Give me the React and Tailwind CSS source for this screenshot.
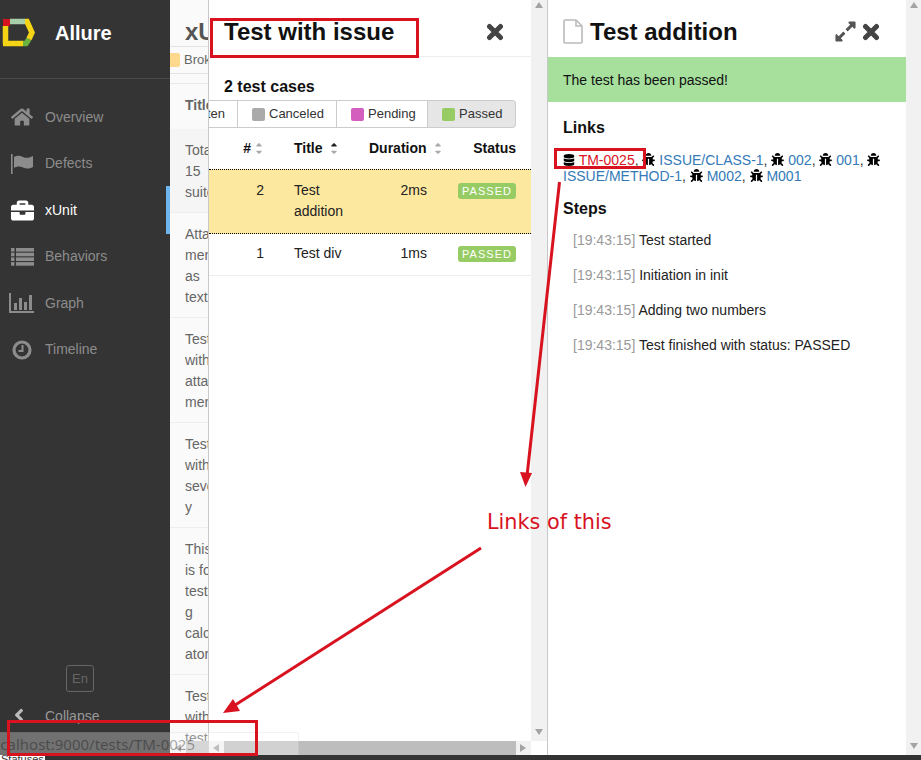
import React from "react";
import { FaExpandAlt, FaBug, FaDatabase, FaHome, FaBriefcase, FaAngleLeft, FaSortUp, FaSortDown } from "react-icons/fa";

const Logo = () => (
  <svg width="34" height="30" viewBox="0 0 34 30" className="shrink-0">
    <g fill="none" strokeWidth="5.5">
      <path d="M4.5 8V26" stroke="#f5d416" />
      <path d="M2 25.5H22" stroke="#f5d416" />
      <path d="M22 25.5H25L28 21" stroke="#6cb23e" />
      <path d="M28 21L31 14.5L26 3.5H24" stroke="#f5d416" />
      <path d="M9 3.5H24" stroke="#a9ceaa" />
    </g>
    <rect x="2" y="1" width="7" height="7" fill="#d5141f" />
  </svg>
);

const GraphIcon = () => (
  <svg width="26" height="20" viewBox="0 0 26 20" fill="#8c8c8c">
    <rect x="0" y="0" width="2" height="19" />
    <rect x="0" y="18" width="25" height="2" />
    <rect x="5" y="10" width="3" height="7" />
    <rect x="10" y="5" width="3" height="12" />
    <rect x="15" y="9" width="3" height="8" />
    <rect x="20" y="2" width="3" height="15" />
  </svg>
);

const FlagIcon = () => (
  <svg width="24" height="20" viewBox="0 0 24 20" fill="#8c8c8c">
    <rect x="1" y="0" width="1.6" height="20" />
    <path d="M4 3C7 1 10 1.5 13 3C16 4.5 19 4 23 2V13C19 15 16 15 13 13.5C10 12 7 12 4 14Z" />
  </svg>
);

const ListIcon = () => (
  <svg width="23" height="18" viewBox="0 0 23 18" fill="#8c8c8c">
    {[0, 4.7, 9.4, 14.1].map((y) => (
      <g key={y}>
        <rect x="0" y={y} width="3.5" height="3.6" />
        <rect x="5" y={y} width="18" height="3.6" />
      </g>
    ))}
  </svg>
);

const ClockIcon = () => (
  <svg width="20" height="20" viewBox="0 0 20 20" fill="none" stroke="#8c8c8c">
    <circle cx="10" cy="10" r="8" strokeWidth="3.2" />
    <path d="M10.5 5V11H6.5" strokeWidth="2" />
  </svg>
);

const CloseIcon = () => (
  <svg width="18" height="18" viewBox="0 0 18 18" fill="none" stroke="#444" strokeWidth="5" strokeLinecap="round" className="shrink-0">
    <path d="M3.5 3.5L14.5 14.5M14.5 3.5L3.5 14.5" />
  </svg>
);

const FileIcon = () => (
  <svg width="20" height="25" viewBox="0 0 20 25" fill="none" stroke="#bbbbbb" strokeWidth="1.6" className="shrink-0">
    <path d="M1 2C1 1.4 1.4 1 2 1H13L19 7V23C19 23.6 18.6 24 18 24H2C1.4 24 1 23.6 1 23Z" />
    <path d="M13 1V7H19" />
  </svg>
);

const navItems = [
  { label: "Overview", icon: <FaHome size={22} /> },
  { label: "Defects", icon: <FlagIcon /> },
  { label: "xUnit", icon: <FaBriefcase size={23} />, active: true },
  { label: "Behaviors", icon: <ListIcon /> },
  { label: "Graph", icon: <GraphIcon /> },
  { label: "Timeline", icon: <ClockIcon /> },
];

const Sidebar = () => (
  <aside className="w-[170px] shrink-0 h-full bg-[#343434] flex flex-col">
    <div className="h-[79px] shrink-0 border-b border-[#4a4a4a] flex items-center pl-[1px] pb-[13px]">
      <Logo />
      <span className="ml-[20px] text-[20px] font-bold text-white">Allure</span>
    </div>
    <nav className="pt-[15px] flex flex-col">
      {navItems.map((item) => (
        <div
          key={item.label}
          className={`relative h-[46.5px] flex items-center pl-[9px] text-[14px] ${item.active ? "text-white" : "text-[#8c8c8c]"}`}
        >
          <span className="w-[26px] flex justify-center">{item.icon}</span>
          <span className="ml-[10px]">{item.label}</span>
          {item.active && <span className="absolute right-0 top-[-1px] bottom-0 w-[4px] bg-[#6eb5ee]" />}
        </div>
      ))}
    </nav>
    <div className="mt-auto flex flex-col">
      <div className="ml-[66px] w-[28px] h-[27px] border border-[#666] rounded-[3px] text-[#666] text-[13px] flex items-center justify-center">
        En
      </div>
      <div className="h-[63px] pt-[14px] flex items-start pl-[9px] text-[14px] text-[#999]">
        <FaAngleLeft size={20} className="text-[#bbb] mt-[-1px]" />
        <span className="ml-[16px]">Collapse</span>
      </div>
    </div>
  </aside>
);

const listRows = [
  { lines: ["Total", "15", "suites"], bg: "bg-[#f5f5f5]", h: "h-[84px]" },
  { lines: ["Attach", "ments", "as", "text"], h: "h-[105px]" },
  { lines: ["Tests", "with", "attach", "ments"], h: "h-[105px]" },
  { lines: ["Tests", "with", "severit", "y"], h: "h-[105px]" },
  { lines: ["This", "is for", "testin", "g", "calcul", "ator"], h: "h-[147px]" },
  { lines: ["Tests", "with", "tests"], h: "h-[70px]" },
];

const Triangle = ({ dir, className = "" }) => {
  const pts = { up: "5,1 9,7 1,7", down: "1,1 9,1 5,7", left: "7,1 7,9 1,5", right: "1,1 1,9 7,5" }[dir];
  return (
    <svg width="10" height="10" viewBox="0 0 10 10" className={className}>
      <polygon points={pts} fill="#a3a3a3" />
    </svg>
  );
};

const XunitPanel = () => (
  <section className="w-[38px] shrink-0 h-full bg-[#fafafa] overflow-hidden flex flex-col whitespace-nowrap">
    <div className="flex-1 min-h-0 overflow-hidden">
      <div className="h-[47px] border-b border-[#e4e4e4] pl-[15px] pt-[17px] text-[24px] leading-[30px] font-bold text-[#555]">xUnit</div>
      <div className="h-[27px] border-b border-[#e4e4e4] flex items-center text-[13px] text-[#666]">
        <span className="shrink-0 w-[10px] h-[14px] bg-[#fcd98c] rounded-r-[2px]" />
        <span className="ml-[4px]">Broken</span>
      </div>
      <div className="h-[10px] border-b border-[#e9e9e9]" />
      <div className="h-[45px] pl-[15px] pb-[2px] flex items-center text-[14px] font-bold text-[#666]">Title</div>
      {listRows.map((row, i) => (
        <div
          key={i}
          className={`${row.h} ${row.bg || ""} border-b border-[#eeeeee] pl-[15px] pt-[11px] text-[14px] leading-[21px] text-[#666]`}
        >
          {row.lines.map((l) => (
            <div key={l}>{l}</div>
          ))}
        </div>
      ))}
    </div>
    <div className="h-[14px] shrink-0 bg-[#f1f1f1] flex items-center pl-[1px]">
      <Triangle dir="left" className="ml-[3px]" />
      <div className="ml-[2px] flex-1 h-full bg-[#c4c4c4]" />
    </div>
  </section>
);

const statusButtons = [
  { label: "Canceled", color: "bg-[#aaaaaa]", w: "w-[99px]" },
  { label: "Pending", color: "bg-[#d35ebe]", w: "w-[91px]" },
  { label: "Passed", color: "bg-[#97cc64]", w: "w-[88px]", active: true },
];

const Badge = () => (
  <span className="inline-flex items-center justify-center w-[58px] h-[16px] rounded-[3px] bg-[#97cc64] text-white text-[11px] tracking-[1px]">
    PASSED
  </span>
);

const GRID = "grid grid-cols-[55px_105px_58px_89px]";

const SortIcon = ({ active }) => (
  <span className="relative inline-block w-[9px] h-[13px]">
    <FaSortUp size={10} className={`absolute left-0 top-0 ${active ? "text-[#222]" : "text-[#aaa]"}`} />
    <FaSortDown size={10} className="absolute left-0 top-[3px] text-[#aaa]" />
  </span>
);

const MiddlePanel = () => (
  <section className="w-[339px] shrink-0 h-full bg-white border-l border-[#c8c8c8] flex">
    <div className="w-[322px] h-full flex flex-col overflow-hidden">
      <div className="flex-1 min-h-0">
        <header className="h-[57px] border-b border-[#eeeeee] pl-[15px] pr-[27px] flex items-start justify-between">
          <h2 className="text-[24px] leading-[30px] pt-[17px] font-bold text-[#111]">Test with issue</h2>
          <span className="mt-[23px]"><CloseIcon /></span>
        </header>
        <div className="pl-[15px] pt-[21px] text-[16px] leading-[18px] font-bold text-[#111]">2 test cases</div>
        <div className="mt-[4px] flex h-[28px] text-[13px] text-[#333]">
          <div className="w-[29px] h-full border-y border-r border-[#cccccc] flex justify-end items-center overflow-hidden pr-[12px]">
            Written
          </div>
          {statusButtons.map((b) => (
            <div
              key={b.label}
              className={`${b.w} h-full border-y border-r border-[#cccccc] flex items-center pl-[14px] ${b.active ? "bg-[#e6e6e6] rounded-r-[4px]" : ""}`}
            >
              <span className={`shrink-0 w-[13px] h-[13px] rounded-[2px] ${b.color}`} />
              <span className="ml-[4px]">{b.label}</span>
            </div>
          ))}
        </div>
        <div className={`${GRID} h-[41px] items-center text-[14px] font-bold text-[#111]`}>
          <div className="flex justify-end items-center gap-[3px] pr-[1px]">
            <span>#</span>
            <SortIcon />
          </div>
          <div className="pl-[30px] flex items-center gap-[6px]">
            <span>Title</span>
            <SortIcon active />
          </div>
          <div className="flex items-center gap-[6px] whitespace-nowrap">
            <span>Duration</span>
            <SortIcon />
          </div>
          <div className="text-right">Status</div>
        </div>
        <div className={`${GRID} bg-[#fde8a0] border-y border-dotted border-black pt-[10px] pb-[11px] text-[14px] leading-[21px] text-[#222]`}>
          <div className="text-right">2</div>
          <div className="pl-[30px]">Test addition</div>
          <div className="text-right">2ms</div>
          <div className="flex justify-end pt-[3px]"><Badge /></div>
        </div>
        <div className={`${GRID} border-b border-[#eeeeee] pt-[9px] pb-[11px] text-[14px] leading-[21px] text-[#222]`}>
          <div className="text-right">1</div>
          <div className="pl-[30px]">Test div</div>
          <div className="text-right">1ms</div>
          <div className="flex justify-end pt-[3px]"><Badge /></div>
        </div>
      </div>
      <div className="h-[14px] shrink-0 bg-[#f1f1f1] flex items-center">
        <Triangle dir="left" className="ml-[3px]" />
        <div className="ml-[2px] w-[292px] h-full bg-[#bdbdbd]" />
        <Triangle dir="right" className="ml-[3px]" />
      </div>
    </div>
    <div className="flex-1 h-full flex flex-col">
      <div className="h-[741px] bg-[#f1f1f1] flex flex-col items-center justify-between pt-[1px] pb-[3px]">
        <Triangle dir="up" />
        <Triangle dir="down" />
      </div>
    </div>
  </section>
);

const links = [
  ["ISSUE/CLASS-1", ", "],
  ["002", ", "],
  ["001", ", "],
  ["ISSUE/METHOD-1", ", "],
  ["M002", ", "],
  ["M001", ""],
];

const steps = ["Test started", "Initiation in init", "Adding two numbers", "Test finished with status: PASSED"];

const RightPanel = () => (
  <section className="flex-1 min-w-0 h-full bg-white border-l border-[#c8c8c8] flex">
    <div className="flex-1 min-w-0">
      <header className="h-[57px] pl-[15px] pr-[26px] flex items-start">
        <span className="mt-[19px]"><FileIcon /></span>
        <h2 className="ml-[7px] text-[24px] leading-[30px] pt-[17px] font-bold text-[#111]">Test addition</h2>
        <FaExpandAlt size={23} className="ml-auto text-[#555] mt-[20px]" />
        <span className="ml-[5px] mt-[23px]"><CloseIcon /></span>
      </header>
      <div className="h-[45px] bg-[#a6e09c] pl-[15px] pt-[1px] flex items-center text-[14px] text-[#111]">The test has been passed!</div>
      <div className="pl-[15px] pr-[20px]">
        <h3 className="pt-[17px] text-[16px] leading-[18px] font-bold text-[#111]">Links</h3>
        <p className="mt-[15px] text-[14px] leading-[16px] text-[#333]">
          <FaDatabase size={12} className="inline align-[-1px] text-black" />{" "}
          <a className="text-[#d8121f]">TM-0025</a>,{" "}
          {links.map(([label, sep]) => (
            <React.Fragment key={label}>
              <FaBug size={13} className="inline align-[-1px] text-black" />{" "}
              <a className="text-[#337ab7]">{label}</a>
              {sep}
            </React.Fragment>
          ))}
        </p>
        <h3 className="mt-[16px] text-[16px] leading-[18px] font-bold text-[#111]">Steps</h3>
        <div className="mt-[14px] pl-[10px] flex flex-col gap-[19px] text-[14px] leading-[16px] text-[#222]">
          {steps.map((s) => (
            <div key={s}>
              <span className="text-[#999]">[19:43:15]</span> {s}
            </div>
          ))}
        </div>
      </div>
    </div>
    <div className="w-[15px] shrink-0 h-full bg-[#f1f1f1] flex flex-col items-center justify-between pt-[1px] pb-[3px]">
      <Triangle dir="up" />
      <Triangle dir="down" />
    </div>
  </section>
);

const Annotations = () => (
  <>
    <svg width="921" height="760" className="absolute left-0 top-0 pointer-events-none">
      <g fill="none" stroke="#d8121f" strokeWidth="3">
        <rect x="211.5" y="19.5" width="206" height="37" />
        <rect x="555.5" y="149.5" width="89" height="18" />
        <rect x="8.5" y="721.5" width="248" height="33" />
        <path d="M559.5 182L527 476" />
        <path d="M481 548L232 707" />
      </g>
      <polygon points="525.5,487 520,472 532,473" fill="#d8121f" />
      <polygon points="223,713 233,699 240,711" fill="#d8121f" />
    </svg>
    <span className="absolute left-[487px] top-[509px] text-[20.8px] leading-[26px] text-[#d8121f] font-['DejaVu_Sans',sans-serif]">
      Links of this
    </span>
  </>
);

const StatusTip = () => (
  <div className="absolute left-0 top-[732px] w-[299px] h-[23px] bg-white/30 border-t border-r border-black/5 rounded-tr-[3px] overflow-hidden">
    <div className="w-[195px] h-full flex justify-end items-center overflow-hidden whitespace-nowrap text-[15px] text-black/35 font-['Noto_Sans',sans-serif]">
      http://localhost:9000/tests/TM-0025
    </div>
  </div>
);

export default function App() {
  return (
    <div className="relative w-[921px] h-[760px] overflow-hidden bg-[#333] font-['Liberation_Sans',Arial,sans-serif]">
      <div className="h-[755px] flex">
        <Sidebar />
        <XunitPanel />
        <MiddlePanel />
        <RightPanel />
      </div>
      <div className="h-[5px] overflow-hidden">
        <div className="w-[45px] h-full bg-white text-[11px] leading-[8px] text-[#333] pl-[1px]">Statuses</div>
      </div>
      <StatusTip />
      <Annotations />
    </div>
  );
}
